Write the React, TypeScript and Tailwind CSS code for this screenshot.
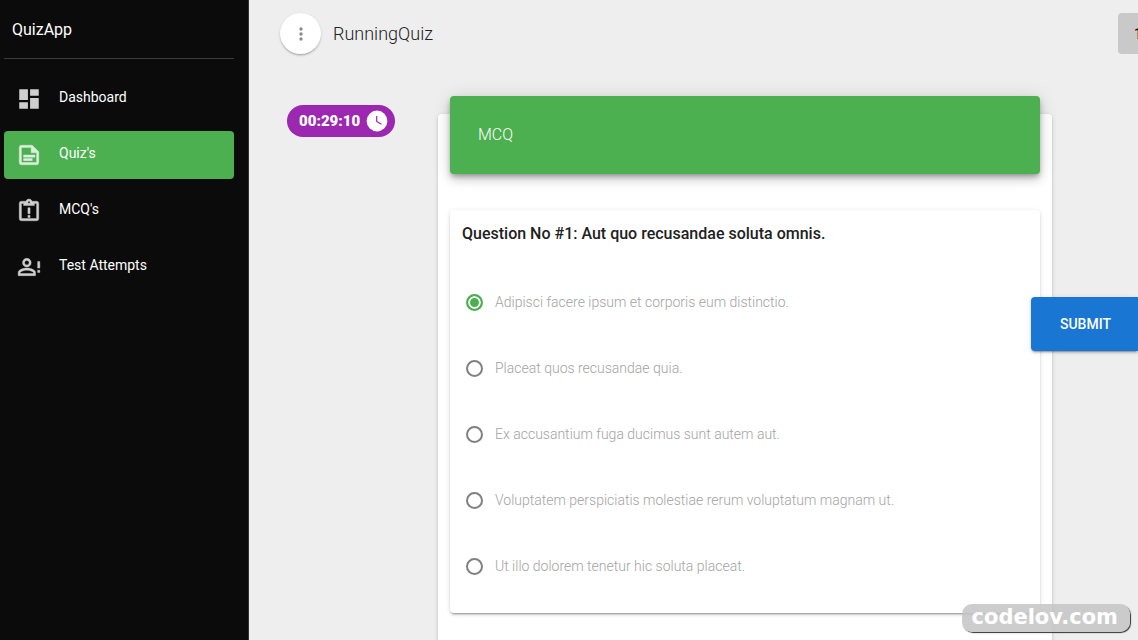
import React from 'react';

const navItems = [
  { label: 'Dashboard', active: false, path: 'M13,3V9H21V3M13,21H21V11H13M3,21H11V15H3M3,13H11V3H3V13Z' },
  {
    label: "Quiz's",
    active: true,
    path: 'M15,3H5A2,2 0 0,0 3,5V19A2,2 0 0,0 5,21H19A2,2 0 0,0 21,19V9L15,3M19,19H5V5H14V10H19V19M17.5,14H7V12H17.5V14M15,17.2H7V15.2H15V17.2Z',
  },
  {
    label: "MCQ's",
    active: false,
    path: 'M19,3H14.82C14.4,1.84 13.3,1 12,1C10.7,1 9.6,1.84 9.18,3H5A2,2 0 0,0 3,5V19A2,2 0 0,0 5,21H19A2,2 0 0,0 21,19V5A2,2 0 0,0 19,3M12,3A1,1 0 0,1 13,4A1,1 0 0,1 12,5A1,1 0 0,1 11,4A1,1 0 0,1 12,3M19,19H5V5H7V7H17V5H19V19M11,9H13V14.5H11V9M11,16H13V18H11V16Z',
  },
  {
    label: 'Test Attempts',
    active: false,
    path: 'M20,12V7H22V13H20V12M20,17H22V15H20V17M10,13C7.33,13 2,14.34 2,17V20H18V17C18,14.34 12.67,13 10,13M10,4A4,4 0 0,0 6,8A4,4 0 0,0 10,12A4,4 0 0,0 14,8A4,4 0 0,0 10,4M10,14.9C12.97,14.9 16.1,16.36 16.1,17V18.1H3.9V17C3.9,16.36 7,14.9 10,14.9M10,5.9A2.1,2.1 0 0,1 12.1,8A2.1,2.1 0 0,1 10,10.1A2.1,2.1 0 0,1 7.9,8A2.1,2.1 0 0,1 10,5.9Z',
  },
];

const options = [
  'Adipisci facere ipsum et corporis eum distinctio.',
  'Placeat quos recusandae quia.',
  'Ex accusantium fuga ducimus sunt autem aut.',
  'Voluptatem perspiciatis molestiae rerum voluptatum magnam ut.',
  'Ut illo dolorem tenetur hic soluta placeat.',
];

function Icon({ path, className }: { path: string; className: string }) {
  return (
    <svg viewBox="0 0 24 24" className={className} fill="currentColor" stroke="currentColor" aria-hidden="true">
      <path d={path} />
    </svg>
  );
}

function Sidebar() {
  return (
    <aside className="w-[249px] shrink-0 border-r border-[#333] bg-[#0b0b0b] pl-1 pr-3.5 text-white">
      <div className="flex h-[59px] items-center border-b border-[#3b3b3b] px-2 pt-0.5 text-base">QuizApp</div>
      <nav className="mt-4 flex flex-col gap-2">
        {navItems.map((item) => (
          <a
            key={item.label}
            href="#"
            className={
              item.active
                ? 'flex h-12 items-center rounded bg-[#4caf50] px-3'
                : 'flex h-12 items-center rounded px-3'
            }
          >
            <Icon
              path={item.path}
              className={
                item.label === 'Dashboard'
                  ? 'mr-[17px] size-[26px] shrink-0 stroke-0 opacity-80'
                  : 'mr-[17px] size-[26px] shrink-0 stroke-[0.4] opacity-80'
              }
            />
            <span className="pb-1 text-sm leading-5">{item.label}</span>
          </a>
        ))}
      </nav>
    </aside>
  );
}

function Header() {
  return (
    <header className="flex items-center gap-3 pb-3 pl-[31px] pt-[13px]">
      <button
        aria-label="Menu"
        className="flex size-[41px] shrink-0 items-center justify-center rounded-full bg-white text-[#8a8a8a] shadow-[0_2px_2px_-1px_rgba(0,0,0,0.25),0_1px_3px_rgba(0,0,0,0.15)]"
      >
        <Icon
          className="size-5 stroke-0"
          path="M12,16A2,2 0 0,1 14,18A2,2 0 0,1 12,20A2,2 0 0,1 10,18A2,2 0 0,1 12,16M12,10A2,2 0 0,1 14,12A2,2 0 0,1 12,14A2,2 0 0,1 10,12A2,2 0 0,1 12,10M12,4A2,2 0 0,1 14,6A2,2 0 0,1 12,8A2,2 0 0,1 10,6A2,2 0 0,1 12,4Z"
        />
      </button>
      <h1 className="flex-1 text-lg font-light text-[#212121]">RunningQuiz</h1>
      <button className="-mr-10 h-[41px] w-15 shrink-0 rounded bg-[#c9c9c9] pl-4 text-left text-sm text-black">1</button>
    </header>
  );
}

export default function App() {
  return (
    <div className="relative flex h-screen overflow-hidden bg-[#eeeeee] font-['Roboto',sans-serif]">
      <Sidebar />
      <div className="flex min-w-0 flex-1 flex-col">
        <Header />
        <main className="flex flex-1 items-start">
          <div className="w-[189px] shrink-0 pl-[38px] pt-[39px]">
            <div className="flex h-8 w-[108px] items-center justify-between rounded-full bg-[#9c27b0] pl-3 pr-1.5 font-black text-white">
              <time className="text-[15px]">00:29:10</time>
              <svg viewBox="0 0 24 24" className="size-6" aria-hidden="true">
                <circle cx="12" cy="12" r="10.4" fill="#fff" />
                <path d="M11.7 7V12.4L16.5 15.2" fill="none" stroke="#9c27b0" strokeWidth="1.2" />
              </svg>
            </div>
          </div>
          <section className="mr-[86px] mt-12 min-w-0 flex-1 rounded bg-white px-3 pb-10 shadow-[0_3px_1px_-2px_rgba(0,0,0,0.2),0_2px_2px_rgba(0,0,0,0.14),0_1px_5px_rgba(0,0,0,0.12)]">
            <h2 className="relative -mt-[18px] flex h-[78px] items-center rounded bg-[#4caf50] px-7 text-base font-light text-white shadow-[0_3px_5px_-1px_rgba(0,0,0,0.3),0_6px_10px_rgba(0,0,0,0.14),0_1px_18px_rgba(0,0,0,0.12)]">
              MCQ
            </h2>
            <fieldset className="mt-9 rounded px-3 pb-3.5 shadow-[0_3px_1px_-2px_rgba(0,0,0,0.2),0_2px_2px_rgba(0,0,0,0.14),0_1px_5px_rgba(0,0,0,0.12)]">
              <legend className="float-left w-full pt-3 text-base font-medium text-[#212121]">
                Question No #1: Aut quo recusandae soluta omnis.
              </legend>
              <div className="clear-both flex flex-col pt-[23px]">
                {options.map((option, index) => (
                  <label key={option} className="flex h-[66px] items-center gap-3 pl-1 text-sm font-light text-[#a3a3a3]">
                    <input
                      type="radio"
                      name="answer"
                      defaultChecked={index === 0}
                      className="size-[17px] shrink-0 appearance-none rounded-full border-2 border-[#808080] checked:border-[#4caf50] checked:bg-[#4caf50] checked:shadow-[inset_0_0_0_2px_white]"
                    />
                    {option}
                  </label>
                ))}
              </div>
            </fieldset>
          </section>
        </main>
      </div>
      <button className="absolute right-0 top-[297px] h-[54px] w-[107px] rounded-l bg-[#1976d2] pl-0.5 text-sm font-medium text-white shadow-[0_3px_1px_-2px_rgba(0,0,0,0.2),0_2px_2px_rgba(0,0,0,0.14),0_1px_5px_rgba(0,0,0,0.12)]">
        SUBMIT
      </button>
      <div className="absolute bottom-2 right-2 flex h-7 items-center rounded-[10px] bg-[#c4c4c4]/85 pl-2.5 pr-3 font-['DejaVu_Sans',sans-serif] text-[21px] font-bold text-white shadow-[1px_1px_1px_#333]">
        codelov.com
      </div>
    </div>
  );
}
